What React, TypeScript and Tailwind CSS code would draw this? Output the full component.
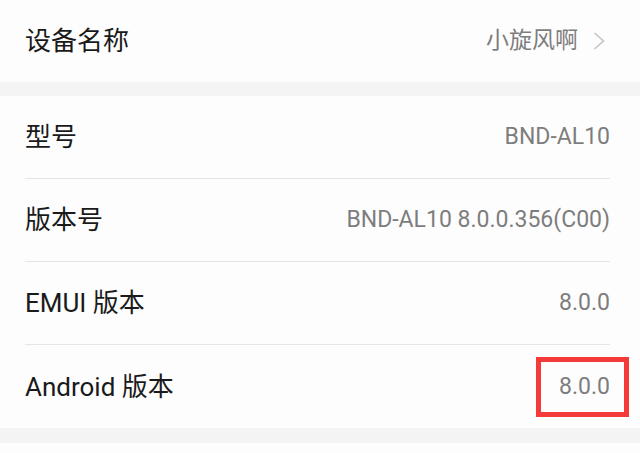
import React from 'react';

const font = { fontFamily: 'Roboto, "Noto Sans CJK SC", sans-serif' };

const Row = ({ label, value, chevron, marked, last }: { label: string; value: string; chevron?: boolean; marked?: boolean; last?: boolean }) => (
    <div className="pl-[25px] pr-[30px]">
        <div className={`h-[83px] flex items-center justify-between ${last ? '' : 'border-b border-[#e6e6e6]'}`}>
            <span className="text-[26px] leading-[32px] text-[#1a1a1a]">{label}</span>
            <div className="flex items-center">
                <span className="relative block text-[23px] leading-[28px] text-[#7d7d7d]">
                    {value}
                    {marked && <span className="absolute -left-[23px] -right-[19px] -top-[16px] -bottom-[16px] border-[5px] border-[#f53a3a]" />}
                </span>
                {chevron && (
                    <svg className="ml-[15px] mr-[5px]" width="12" height="18" viewBox="0 0 12 18" fill="none">
                        <path d="M1.5 1 L10.5 9 L1.5 17" stroke="#c4c4c4" strokeWidth="1.6" />
                    </svg>
                )}
            </div>
        </div>
    </div>
);

export default function App() {
    return (
        <div className="w-[640px] h-[453px] bg-[#f4f4f4] overflow-hidden" style={font}>
            <div className="bg-[#fdfdfd] -mt-[1px]">
                <Row label="设备名称" value="小旋风啊" chevron last />
            </div>
            <div className="h-[14px]" />
            <div className="bg-[#fdfdfd]">
                <Row label="型号" value="BND-AL10" />
                <Row label="版本号" value="BND-AL10 8.0.0.356(C00)" />
                <Row label="EMUI 版本" value="8.0.0" />
                <Row label="Android 版本" value="8.0.0" marked last />
            </div>
            <div className="h-[15px]" />
            <div className="bg-[#fdfdfd] h-[20px]" />
        </div>
    );
}
